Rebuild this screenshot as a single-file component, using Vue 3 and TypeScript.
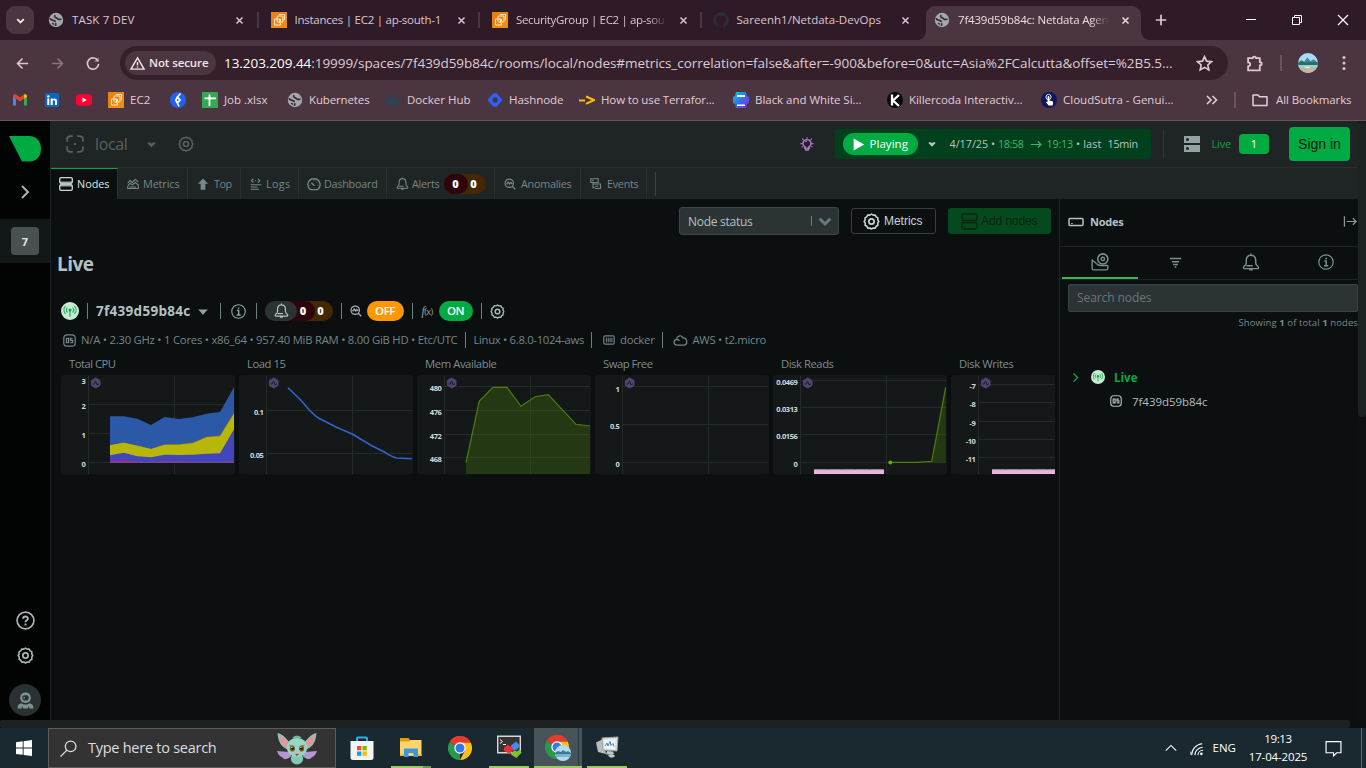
<script setup lang="ts">
import { h } from 'vue'

const icons: Record<string, string> = {
  globe: '<circle cx="8" cy="8" r="7.200" fill="#a3a8ac"/><path d="M2.200 6.200c.3 1.600 1.600 2 3 2.100 1.300.1 1.700 1 2.600 1.400M7.500 13.800c.2-1.200 0-1.700.6-2.500M7.300 3.200c-1.200 1-.6 2.200.7 2.400 1.300.2 1.200 1.400 2.300 1.700 1.300.3 2.300-.3 3.300.3M4.300 11l1.500 1.500" fill="none" stroke="#3f2b36" stroke-width="1.700"/>',
  ec2: '<rect width="16" height="16" fill="#e98213"/><path d="M0 16 16 0v16z" fill="#f49a1c" opacity=".45"/><g fill="none" stroke="#ffe9cc" stroke-width="1"><rect x="6" y="4" width="6" height="6" rx=".8"/><path d="M8 2.500h5.500V8M9.500 7v2.500M4 7h-.5v6h6v-2M4 7h4.500v4.200"/></g>',
  github: '<path fill="#2b2f36" fill-rule="evenodd" d="M8 .3a8 8 0 0 0-2.500 15.500c.4.100.5-.2.5-.4v-1.500c-2.200.5-2.700-.9-2.700-.9-.4-.9-.9-1.200-.9-1.200-.7-.5.100-.5.100-.5.800.1 1.200.8 1.200.8.700 1.200 1.900.9 2.300.7.100-.5.300-.9.500-1.100-1.800-.2-3.600-.9-3.600-4 0-.9.300-1.600.8-2.200-.1-.200-.4-1 .1-2.100 0 0 .7-.2 2.200.8a7.500 7.500 0 0 1 4 0c1.500-1 2.200-.8 2.200-.8.4 1.100.200 1.900.1 2.100.5.600.8 1.300.8 2.200 0 3.100-1.900 3.800-3.600 4 .3.200.500.7.500 1.500v2.200c0 .2.100.5.500.4A8 8 0 0 0 8 .3z"/>',
  chev: '<path d="m4.500 6.500 3.500 3.500 3.500-3.500" fill="none" stroke="currentColor" stroke-width="2"/>',
  close: '<path d="m4.300 4.300 7.400 7.400m0-7.400-7.400 7.400" stroke="currentColor" stroke-width="1.800"/>',
  plus: '<path d="M8 2.800v10.400M2.800 8h10.400" stroke="currentColor" stroke-width="1.700"/>',
  min: '<path d="M3 7.500h10" stroke="currentColor"/>',
  restore: '<path d="M3.500 5.500h7v7h-7zM5.500 5V3.500h7v7H11" fill="none" stroke="currentColor"/>',
  xwin: '<path d="m3 3 10 10m0-10L3 13" stroke="currentColor" stroke-width="1.200"/>',
  back: '<path d="M14 8H3m5-5.300L2.700 8 8 13.300" fill="none" stroke="currentColor" stroke-width="1.700"/>',
  fwd: '<path d="M2 8h11M8 2.700 13.300 8 8 13.300" fill="none" stroke="currentColor" stroke-width="1.700"/>',
  reload: '<path d="M13 6A5.600 5.600 0 1 0 13.600 9" fill="none" stroke="currentColor" stroke-width="1.700"/><path d="M13.900 2v5h-5z" fill="currentColor"/>',
  warn: '<path d="M8 2 15 14H1zM8 6.500v3.700M8 11.200v1.300" fill="none" stroke="currentColor" stroke-width="1.500"/>',
  star: '<path d="m8 1.500 1.900 4.300 4.700.5-3.500 3.100 1 4.600L8 11.600 3.900 14l1-4.600L1.400 6.300l4.700-.5z" fill="none" stroke="currentColor" stroke-width="1.500"/>',
  puzzle: '<path d="M2 3h4.300c0-2 3.200-2 3.200 0H13v3.600c2.300 0 2.300 3.200 0 3.200V14.500H2v-3.800c2.600-.2 2.600-3.600 0-3.800z" fill="none" stroke="currentColor" stroke-width="1.700"/>',
  avatar: '<clipPath id="av"><circle cx="8" cy="8" r="8"/></clipPath><g clip-path="url(#av)"><path fill="#a8dcf0" d="M0 0h16v16H0z"/><path d="M0 8 2.500 5.500 5 7l2.500-3.500L10 6.500l2.500-1.500L16 8z" fill="#3a86a6"/><path d="M0 7.500c4-1.500 6 .5 9 0s5-1 7 0V10H0z" fill="#2d6f5c"/><path d="M0 9.500h16V13H0z" fill="#8fcfe0"/><path d="M0 12.500c5-2 11-1 16-1V16H0z" fill="#c6b79b"/><path d="M5 11h5l-1 .8H6z" fill="#fff"/></g>',
  dots: '<g fill="currentColor"><circle cx="8" cy="2.500" r="1.500"/><circle cx="8" cy="8" r="1.500"/><circle cx="8" cy="13.500" r="1.500"/></g>',
  gmail: '<path d="M1 4v9.500h3V7z" fill="#4285f4"/><path d="M12 7v6.500h3V4z" fill="#34a853"/><path d="M1 4.500V4c0-1.800 2-2.300 3-1.400l4 3 4-3v4L8 9.600 1 4.500z" fill="#ea4335"/><path d="M12 2.600c1-.9 3-.4 3 1.400v.8l-3 2.300z" fill="#fbbc04"/>',
  linkedin: '<rect x="1" y="1" width="14" height="14" rx="1.500" fill="#0a66c2"/><path d="M3.300 6.500h2V13h-2zM4.300 3.200a1.200 1.200 0 1 1 0 2.400 1.200 1.200 0 0 1 0-2.400M6.700 6.500h2v1c1-1.700 4.300-1.600 4.300 1.500v4h-2V9.500c0-1.800-2.300-1.700-2.300 0V13h-2z" fill="#fff"/>',
  youtube: '<rect y="2.300" width="16" height="11.400" rx="3" fill="#ff0033"/><path d="m6.500 5.600 4.200 2.400-4.200 2.400z" fill="#fff"/>',
  blue: '<circle cx="8" cy="8" r="8" fill="#2460ee"/><path d="M10.500 1.500 7.300 5.200 10 8 7.300 10.800 9 14.500M7.300 5.200 5.800 8.200l1.500 2.600" fill="none" stroke="#fff" stroke-width="1.700"/>',
  sheet: '<rect width="16" height="16" rx="1" fill="#34a853"/><path d="M7.500 2.500v11.500M2.500 6.300h11.500" stroke="#fff" stroke-width="1.800"/>',
  docker: '<circle cx="8" cy="8" r="7.500" fill="none" stroke="#284454" stroke-width=".8"/><path d="M2.500 8h9c.2-1 .9-1.500 1-1.500l.8 1.200 1 .2c-.6 1-1.500 1.100-1.800 1.100-.8 2.300-2.500 3.500-5 3.500-3 0-5-1.500-5-4.500M4 6h4v1.500H4zM7 4h2v3.500H7z" fill="#24485c"/>',
  hash: '<rect x="2.300" y="2.300" width="11.400" height="11.400" rx="3" transform="rotate(45 8 8)" fill="#2962ff"/><circle cx="8" cy="8" r="2.700" fill="#4b3540"/>',
  terra: '<path d="M0 8.500h6M7 4.500 15 8 7 11.800" fill="none" stroke="#fbbd08" stroke-width="2"/>',
  bw: '<linearGradient id="bwg" x1="0" y1="0" x2="1" y2="1"><stop stop-color="#00d5d0"/><stop offset=".5" stop-color="#346ee8"/><stop offset="1" stop-color="#9a22e5"/></linearGradient><path d="M3 0h10l1 4 2 1v6l-2 1-1 4H3l-1-4-2-1V5l2-1z" fill="url(#bwg)"/><path d="M4 3h8v2H4zM4 12.500h8V14H4z" fill="#fff"/>',
  killer: '<circle cx="8" cy="8" r="8" fill="#080808"/><path d="M5 2.500v11M12 3 6 8.500 12 14" fill="none" stroke="#fff" stroke-width="2.300"/>',
  cloudsutra: '<circle cx="8" cy="8" r="8" fill="#10165c"/><circle cx="7.500" cy="5" r="2.600" fill="none" stroke="#dfe6ff" stroke-width="1"/><path d="M6.600 5c0-1.300 1.800-1.300 1.800 0v3.500l3 .8c1 .3.900 1.700.2 4.200h-4l-2.400-3c-.3-.9.700-1 1.400-.4z" fill="#fff"/>',
  more: '<path d="m3 4 4 4-4 4m5.500-8 4 4-4 4" fill="none" stroke="currentColor" stroke-width="1.600"/>',
  folder: '<path d="M1 3h5l1.500 1.800H15V13.500H1z" fill="none" stroke="currentColor" stroke-width="1.500" stroke-linejoin="round"/>',
  netdata: '<path d="M0 0h20.500c6.500 0 11.500 5 11.500 13 0 7.500-5 12.500-11 12.500h-8z" fill="#00ab44"/>',
  right: '<path d="m5 2 6 6-6 6" fill="none" stroke="currentColor" stroke-width="2"/>',
  help: '<circle cx="8" cy="8" r="7.100" fill="none" stroke="currentColor" stroke-width="1.400"/><path d="M6 6.600c0-2.600 4-2.500 4-.3 0 1.400-2 1.500-2 3.100M8 10.600v1.600" fill="none" stroke="currentColor" stroke-width="1.600"/>',
  gear: '<path d="M8 1.100 9.600 2l1.900-.1.900 1.700 1.600 1-.1 1.900.9 1.500-.9 1.600.1 1.900-1.600 1-.9 1.700-1.900-.1-1.600.9-1.600-.9-1.900.1-.9-1.700-1.600-1 .1-1.900L1.100 8 2 6.500l-.1-1.900 1.600-1 .9-1.700 1.900.1z" fill="none" stroke="currentColor" stroke-width="1.500" stroke-linejoin="round"/><circle cx="8" cy="8" r="2.500" fill="none" stroke="currentColor" stroke-width="1.600"/>',
  astro: '<path d="M8 .4c3.300 0 5 2.200 5 5s-1.700 4.900-5 4.900-5-2.100-5-4.900 1.700-5 5-5M5 5.300C5 7.200 6 8 8 8s3-.8 3-2.700-1-2.200-3-2.200-3 .3-3 2.200M4 10.600l2.300 1.100h3.400l2.300-1.100c2.500.6 3.500 2.300 3.500 5h-4v-2h-1v2h-5v-2h-1v2h-4c0-2.700 1-4.400 3.500-5" fill="currentColor" fill-rule="evenodd"/><circle cx="6.700" cy="5.500" r=".8" fill="currentColor"/>',
  space: '<path d="M1 6V4q0-3 3-3h2M10 1h2q3 0 3 3v2M15 10v2q0 3-3 3h-2M6 15H4q-3 0-3-3v-2" fill="none" stroke="currentColor" stroke-width="1.500"/><path d="M7.200 7.200h1.700v1.700H7.200z" fill="currentColor"/>',
  tri: '<path d="M2.500 4h11L8 10z" fill="currentColor"/>',
  heartchev: '<path d="M3.500 5.500h3L8 7l1.500-1.500h3L12.500 7 8 11.500 3.500 7z" fill="currentColor"/>',
  bulb: '<path d="M5.800 12.500v-1.300C1.500 8.500 3.500 3 8 3s6.500 5.500 2.200 8.200v1.300M5.500 12.700h5l-1.200 2.100H6.700z" fill="none" stroke="currentColor" stroke-width="1.600"/><path d="M.5 7.500h1.700M13.800 7.500h1.700M2.500 1.800l1.500 1.500M13.500 1.800 12 3.300M1.800 11.500l1.400-.7M14.200 11.500l-1.400-.7M8 .3v1.500M6 5.500l2-1" stroke="currentColor" stroke-width="1.400"/>',
  play: '<path d="M2 .5v15L15 8z" fill="#fff"/>',
  arrow: '<path d="M1 8h12.500M9.800 4.300 13.500 8l-3.700 3.700" fill="none" stroke="currentColor" stroke-width="1.400"/>',
  server: '<path d="M0 0h16v7H0zM0 9h16v7H0z" fill="#93a3a4"/><circle cx="3.500" cy="3.500" r="1.500" fill="#1f2424"/><circle cx="3.500" cy="12.500" r="1.500" fill="#1f2424"/>',
  nodes: '<rect x="1" y="1" width="14" height="6" rx="1.500" fill="none" stroke="currentColor" stroke-width="1.300"/><rect x="1" y="9" width="14" height="6" rx="1.500" fill="none" stroke="currentColor" stroke-width="1.300"/><path d="M3 5h1M3 13h1" stroke="currentColor"/>',
  nodesFill: '<path d="M1 5h14v6H1z" fill="#788180"/><rect x=".8" y=".8" width="14.400" height="6.200" rx="1.500" fill="none" stroke="#cfd6d5" stroke-width="1.500"/><rect x=".8" y="9" width="14.400" height="6.200" rx="1.500" fill="none" stroke="#cfd6d5" stroke-width="1.500"/>',
  metrics: '<path d="M1 7l3-4 3 3 4-4 4 3M1 11l3-4 3 2 4-3 4 3v5H2M1 11v3h14M3 12h9" fill="none" stroke="currentColor" stroke-width="1.500"/>',
  top: '<path d="M8 .8 14.800 7.500H11.200V15.500H4.800V7.500H1.200z" fill="currentColor"/>',
  logs: '<path d="M4.500 1 2 3.500 4.500 6M10.500 1 13 3.500 10.500 6M7 3.500h1M1 9h14M1 12h9M1 15h11" fill="none" stroke="currentColor" stroke-width="1.500"/>',
  dash: '<path d="M4 14.500C-1 11 .5 2 8 2s9 9 4 12.500zM8.500 10 5 6.500" fill="none" stroke="currentColor" stroke-width="1.500"/><path d="M3 9.500h1M12 9.500h1M8 4v1M11.500 5.500l-.7.700" stroke="currentColor"/>',
  bell: '<path d="M1.800 12c1.200-.8 1.900-1.600 2-3V6.300c.3-5.700 8.100-5.700 8.400 0V9c.1 1.400.8 2.200 2 3 .9.900.5 1.900-.6 1.900H2.400c-1.100 0-1.500-1-.6-1.900M4 11.300h5.500M6.500 15h3M8 .5v1.500" fill="none" stroke="currentColor" stroke-width="1.300"/>',
  anomaly: '<circle cx="7" cy="7" r="5.600" fill="none" stroke="currentColor" stroke-width="1.600"/><path d="M3.500 8.500l2-3 2 2.500 1.500-2 2 2M11 11l4 4" fill="none" stroke="currentColor" stroke-width="1.700"/>',
  events: '<path d="M1 1h10v5H1zM3 3.500h2M4 6v7h3M5 8h9v6H7M7 11h4" fill="none" stroke="currentColor" stroke-width="1.500"/>',
  signal: '<circle cx="9" cy="9" r="9" fill="#c5ecd0"/><circle cx="9" cy="8" r="1.500" fill="#00ab44"/><path d="M9 9v5.500M6.500 5.500c-1.300 1.400-1.300 3.600 0 5M11.500 5.500c1.300 1.400 1.300 3.600 0 5M4.500 4c-2 2.300-2 5.700 0 8M13.500 4c2 2.300 2 5.700 0 8" fill="none" stroke="#1ba552" stroke-width="1.100"/>',
  info: '<circle cx="8" cy="8" r="7.200" fill="none" stroke="currentColor" stroke-width="1.200"/><path d="M6.300 7H8.200v4.500M6 11.700h4.300M7.200 4.400h1.800" fill="none" stroke="currentColor" stroke-width="1.500"/>',
  os: '<rect x="1" y="1" width="14" height="14" rx="4" fill="none" stroke="currentColor" stroke-width="1.500"/><path d="M4.300 5.500h2.600v5H4.300zM11.800 5.500H9.300v2.400h2.500v2.600H9" fill="none" stroke="currentColor" stroke-width="1.600"/>',
  box: '<rect x="1" y="2.500" width="14" height="11" rx="2" fill="none" stroke="currentColor" stroke-width="1.500"/><path d="M4.500 5v6M7 5v6M9.500 5v6M12 5v6" stroke="currentColor" stroke-width="1.400"/>',
  cloud: '<path d="M4.500 13C0 13 .2 7 4 6.700 4.500 2 9.700 2 10.500 5.200c5.300-.5 5.500 7.300 1 7.800zM4 6.700c1.500 0 2.500.7 3 1.600" fill="none" stroke="currentColor" stroke-width="1.300"/>',
  drawer: '<rect x="1" y="4.500" width="14" height="7" rx="1" fill="none" stroke="currentColor" stroke-width="1.500"/><path d="M3.200 9.500h1.500" stroke="currentColor"/>',
  collapse: '<path d="M1.500 2.500v11M4 8h10M10.500 4.500 14 8l-3.500 3.500" fill="none" stroke="currentColor" stroke-width="1.300"/>',
  chartgear: '<path d="M1 5.500v8q0 1.500 1.500 1.500h11q1.500 0 1.500-1.500V11.200M1 6.500c2 0 2 2.500 4 2.500M5 9.500c1.500 2.500 3.500 1.500 10 1.500" fill="none" stroke="currentColor" stroke-width="1.200"/><circle cx="10.500" cy="5.300" r="4.500" fill="none" stroke="currentColor" stroke-width="1.400"/><circle cx="10.500" cy="5.300" r="1.500" fill="none" stroke="currentColor" stroke-width="1.200"/>',
  filter: '<path d="M1 3h14M3.500 7h9M5 10.500h6M7 13.500h2" stroke="currentColor" stroke-width="1.900"/>',
  win: '<path d="M0 2.200 6.700 1.300v6.300H0zM7.600 1.200 16 0v7.600H7.600zM0 8.500h6.700v6.300L0 13.900zM7.600 8.500H16V16l-8.400-1.100z" fill="#fff"/>',
  search: '<circle cx="10" cy="6" r="5" fill="none" stroke="currentColor" stroke-width="1.200"/><path d="M6.500 9.500 .5 15.500" stroke="currentColor" stroke-width="1.200"/>',
  bat: '<path d="M12 19.500 0 18.500c1 3 2 5 5 6 2 3 5 2 9-1zM27 19.500l12-1c-1 3-2 5-5 6-2 3-5 2-9-1z" fill="#b497d0"/><path d="M13 11C9 6 5 2 .5 1 1 8 3 14 10 17zM26 11c4-5 8-9 12.500-10C38 8 36 14 29 17z" fill="#8cc5b2"/><path d="M11.500 11C8 7 5 4 2 2.500 3 8 5 13 10 15zM27.500 11c3.500-4 6.500-7 9.500-8.500C36 8 34 13 29 15z" fill="#ef8fa0"/><ellipse cx="19.500" cy="26" rx="6" ry="5.500" fill="#7fcbb4"/><ellipse cx="19.500" cy="15" rx="10" ry="9.500" fill="#96d8c1"/><path d="M15 6c1-2 3-2.500 4.500-2.500S23 4 24 6z" fill="#75b8a0"/><ellipse cx="15" cy="16" rx="2.500" ry="3" fill="#8c5522"/><ellipse cx="24" cy="16" rx="2.500" ry="3" fill="#8c5522"/><circle cx="15.200" cy="16" r="1.300" fill="#23120b"/><circle cx="23.800" cy="16" r="1.300" fill="#23120b"/><circle cx="14.500" cy="15" r=".6" fill="#fff"/><circle cx="23.300" cy="15" r=".6" fill="#fff"/><path d="M17.300 21h4.400l-2.200 2.500z" fill="#d8323d"/><path d="m12 12.500 4.500 2m10.500-2-4.500 2" stroke="#4b7c6d" stroke-width=".8"/>',
  store: '<path d="M7 6V2.500q0-1 1-1h8q1 0 1 1V6" fill="none" stroke="#28b2e8" stroke-width="2"/><path d="M.5 5h23v16.500q0 2.500-2.500 2.500H3q-2.500 0-2.500-2.500z" fill="#f3f3f3"/><path d="M7 10h4.300v4.300H7z" fill="#f25022"/><path d="M12.500 10h4.300v4.300h-4.300z" fill="#7fba00"/><path d="M7 15.500h4.300v4.300H7z" fill="#00a4ef"/><path d="M12.500 15.500h4.300v4.300h-4.300z" fill="#ffb900"/>',
  explorer: '<path d="M1 3h8.500l1.500 2h11v4H1z" fill="#e59b0c"/><path d="M1 6.500h9L12 5h10.500v16H1z" fill="#fbd56b"/><path d="M5 22v-8.500h14V22h-4.500v-4h-5v4z" fill="#3b97e0"/><path d="M1 19h4v2H1zM19 19h3.500v2H19z" fill="#f0bd43"/>',
  chrome: '<path d="M12 12 1.600 6A12 12 0 0 1 22.400 6z" fill="#e33b2e"/><path d="M12 12v12A12 12 0 0 1 1.600 6z" fill="#269a4a"/><path d="M12 6.500h10.700A12 12 0 0 1 12 24l4.800-9.200z" fill="#fbc116"/><path d="M1.600 6A12 12 0 0 1 22.700 6.500H12z" fill="#e33b2e"/><circle cx="12" cy="12" r="5.700" fill="#fff"/><circle cx="12" cy="12" r="4.500" fill="#3576e8"/>',
  lake: '<clipPath id="lk"><circle cx="18" cy="18" r="8"/></clipPath><g clip-path="url(#lk)"><path d="M10 10h16v16H10z" fill="#b5dced"/><path d="m10 18 3-2 3 1 2-2 3 2 2-1 3 2v1.500H10z" fill="#3c7890"/><path d="M10 19.500h16V22H10z" fill="#79b4cf"/></g>',
  moba: '<path d="M.7.700h22.600v16.600H.7z" fill="#343434" stroke="#d8d8d8" stroke-width="1.400"/><path d="m3 4 2.500 2L3 8M6 9h3" fill="none" stroke="#fff"/><path d="m7 12 4-3 2 2 2-1 2 4-4 4-3-1-3-2z" fill="#e3313a"/><path d="m14 10 5-4 4 4-3 4-3 1-2-3z" fill="#4888ea"/><path d="m14 18 3-3 3 1 3-2 1.500 3-5 5.500-5-3z" fill="#7ac52f"/>',
  monitor: '<path d="M1 7.500 8 4l3 15-8-2z" fill="#b9bdbe"/><path d="m7 3 16-1-1 14-14-1z" fill="#dfe2e2" stroke="#9da2a3"/><path d="m9 5 11.500-.5-.7 9.500L10 13.500z" fill="#eef5f8"/><path d="m10 11 2-3 1 3 2-4.500 1 4 2-2 1 3" fill="none" stroke="#3a87ad"/><path d="m12 16 6 .5 1 2.500-8 .5zM13 20c3-1 6-1 7 1-2 2.500-6 2-7-1" fill="#c3c7c8"/>',
  up: '<path d="m2 11 6-6 6 6" fill="none" stroke="currentColor" stroke-width="1.200"/>',
  wifi: '<path d="M2 15A13 13 0 0 1 14 2M5.500 15A9.500 9.500 0 0 1 14.500 6M9 15a6 6 0 0 1 6-5.500" fill="none" stroke="currentColor" stroke-width="1.200"/><circle cx="13" cy="13.500" r="1.500" fill="currentColor"/><path d="M1 11v3.500" stroke="currentColor"/>',
  notif: '<path d="M1 1.500h14v10.500h-4L8 15v-3H1z" fill="none" stroke="currentColor" stroke-width="1.100"/>',
}

const Ico = (p: { n: string; w?: number; hh?: number; vb?: string }) =>
  h('svg', {
    width: p.w ?? 16,
    height: p.hh ?? p.w ?? 16,
    viewBox: p.vb ?? '0 0 16 16',
    style: { flex: 'none', display: 'block' },
    innerHTML: icons[p.n],
  })

// Tracks a label out (or in) so that it occupies the given width.
const vFit = {
  mounted(el: HTMLElement, b: { value: number }) {
    const len = (el.textContent ?? '').length
    if (!len || !b.value) return
    const w = el.getBoundingClientRect().width
    el.style.letterSpacing = `${(b.value + 0.5 - w) / len}px`
  },
}

const tabs = [
  { icon: 'globe', label: 'TASK 7 DEV', w: 62 },
  { icon: 'ec2', label: 'Instances | EC2 | ap-south-1', w: 146 },
  { icon: 'ec2', label: 'SecurityGroup | EC2 | ap-sou', w: 148 },
  { icon: 'github', label: 'Sareenh1/Netdata-DevOps', w: 144 },
  { icon: 'globe', label: '7f439d59b84c: Netdata Agen', w: 150 },
]

const bookmarks = [
  { icon: 'gmail', label: '', w: 0, slot: 32 },
  { icon: 'linkedin', label: '', w: 0, slot: 32 },
  { icon: 'youtube', label: '', w: 0, slot: 32 },
  { icon: 'ec2', label: 'EC2', w: 20, slot: 62 },
  { icon: 'blue', label: '', w: 0, slot: 32 },
  { icon: 'sheet', label: 'Job .xlsx', w: 43, slot: 85 },
  { icon: 'globe', label: 'Kubernetes', w: 60, slot: 98 },
  { icon: 'docker', label: 'Docker Hub', w: 63, slot: 102 },
  { icon: 'hash', label: 'Hashnode', w: 54, slot: 92 },
  { icon: 'terra', label: 'How to use Terrafor...', w: 113, slot: 154 },
  { icon: 'bw', label: 'Black and White Si...', w: 106, slot: 154 },
  { icon: 'killer', label: 'Killercoda Interactiv...', w: 113, slot: 154 },
  { icon: 'cloudsutra', label: 'CloudSutra - Genui...', w: 110, slot: 163 },
]

const navTabs = [
  { icon: 'nodesFill', label: 'Nodes', w: 32, slot: 67, pad: 8, size: 14, gap: 4 },
  { icon: 'metrics', label: 'Metrics', w: 36, slot: 70, pad: 9, size: 12, gap: 4 },
  { icon: 'top', label: 'Top', w: 17, slot: 53, pad: 9, size: 12, gap: 5 },
  { icon: 'logs', label: 'Logs', w: 24, slot: 58, pad: 9, size: 12, gap: 4 },
  { icon: 'dash', label: 'Dashboard', w: 53, slot: 88, pad: 8, size: 14, gap: 3 },
  { icon: 'bell', label: 'Alerts', w: 27, slot: 108, pad: 9, size: 13, gap: 3, badge: true },
  { icon: 'anomaly', label: 'Anomalies', w: 50, slot: 86, pad: 9, size: 12, gap: 5 },
  { icon: 'events', label: 'Events', w: 31, slot: 66, pad: 9, size: 12, gap: 5 },
]

const xs = [49, 62.7, 76.3, 90, 103.7, 117.7, 131.7, 145.7, 159, 173]
const area = (ys: number[]) => 'M49 87.500' + xs.map((x, i) => `L${x} ${ys[i]}`).join('') + 'V87.500z'

interface Chart {
  title: string
  w: number
  labels: [string, number][]
  lines: number[]
  paths: { d: string; fill?: string; stroke?: string; sw?: number }[]
  bar?: number
}

const charts: Chart[] = [
  {
    title: 'Total CPU', w: 46,
    labels: [['3', 6], ['2', 31], ['1', 60], ['0', 89]],
    lines: [29.5, 58.5, 87.5],
    paths: [
      { d: area([41.3, 41.3, 43.7, 50, 42, 44, 42.3, 38.7, 37, 12.3]), fill: '#2c58a8' },
      { d: area([70.1, 67.5, 70.4, 73.7, 69.4, 69.2, 67.5, 61.6, 60.5, 37.6]), fill: '#a8680c' },
      { d: area([70.3, 67.7, 70.7, 74, 69.7, 69.7, 68.3, 62.3, 61.3, 38.7]), fill: '#b7b70b' },
      { d: area([80.3, 77.7, 81.3, 82.3, 79.7, 80, 79.7, 78.7, 78.3, 54.3]), fill: '#4146bd' },
      { d: area([86.3, 84, 86.7, 87, 86, 86.3, 87, 87, 86.7, 86.3]), fill: '#8b2f9c' },
    ],
  },
  {
    title: 'Load 15', w: 38,
    labels: [['0.1', 37], ['0.05', 80]],
    lines: [35.5, 78.5],
    paths: [{ d: 'M49 12.700 61.700 25 71 35.700Q76 41 80.300 43.500L97 52 113.700 59.300Q123 65 132.700 70.700L146 77.300Q153 82 157.700 83L173 83.700', stroke: '#3463c9', sw: 1.6 }],
  },
  {
    title: 'Mem Available', w: 71,
    labels: [['480', 13.5], ['476', 37.5], ['472', 61.5], ['468', 84.5]],
    lines: [11.5, 35.5, 59.5, 82.5],
    paths: [
      { d: 'M49 99V87.700L62.300 26 76 12.300H90L104 31.300 118 21.700 131.300 19.700 145 34.300 159 49.300 173 51V99z', fill: 'rgba(78,132,10,.3)' },
      { d: 'M49 87.700 62.300 26 76 12.300H90L104 31.300 118 21.700 131.300 19.700 145 34.300 159 49.300 173 51', stroke: '#4d7f0c', sw: 1.2 },
    ],
  },
  {
    title: 'Swap Free', w: 49,
    labels: [['1', 14.5], ['0.5', 51.5], ['0', 89]],
    lines: [11.5, 49.5, 87.5],
    paths: [],
  },
  {
    title: 'Disk Reads', w: 52,
    labels: [['0.0469', 7.5], ['0.0313', 34.5], ['0.0156', 61.5], ['0', 89]],
    lines: [5.5, 32.5, 59.5, 87.5],
    paths: [
      { d: 'M117.300 87.500 158.700 86.300 172.700 12.300V87.500z', fill: 'rgba(78,132,10,.3)' },
      { d: 'M117.300 87.300H145L158.700 86.300 172.700 12.300', stroke: '#4d7f0c', sw: 1.2 },
      { d: 'M115.300 87.500a2 2 0 1 1 4 0a2 2 0 1 1-4 0', fill: '#66a80f' },
    ],
    bar: 70,
  },
  {
    title: 'Disk Writes', w: 54,
    labels: [['-7', 11.5], ['-8', 29.5], ['-9', 48.5], ['-10', 66.5], ['-11', 84.5]],
    lines: [9.5, 27.5, 46.5, 64.5, 82.5],
    paths: [],
    bar: 130,
  },
]
</script>

<template>
  <div class="screen">
    <div class="tabstrip">
      <div class="tabmenu"><Ico n="chev" :w="15" /></div>
      <div v-for="(t, i) in tabs" :key="i" class="tab" :class="{ active: i === 4, sep: i < 3 }">
        <Ico :n="t.icon" />
        <div class="tabtext" :class="{ faded: i === 2 || i === 4 }"><span v-fit="t.w">{{ t.label }}</span></div>
        <Ico n="close" :w="13" />
      </div>
      <Ico n="plus" :w="16" class="newtab" />
      <div class="wincontrols"><Ico n="min" /><Ico n="restore" /><Ico n="xwin" /></div>
    </div>

    <div class="toolbar">
      <div class="navbtns"><Ico n="back" :w="15" /><Ico n="fwd" :w="15" /><Ico n="reload" /></div>
      <div class="omnibox">
        <div class="chip"><Ico n="warn" :w="15" /><span v-fit="59">Not secure</span></div>
        <div class="url"><span v-fit="948"><b>13.203.209.44</b>:19999/spaces/7f439d59b84c/rooms/local/nodes#metrics_correlation=false&amp;after=-900&amp;before=0&amp;utc=Asia%2FCalcutta&amp;offset=%2B5.5...</span></div>
        <Ico n="star" :w="17" />
      </div>
      <div class="tools"><Ico n="puzzle" :w="17" /><i></i><Ico n="avatar" :w="20" /><Ico n="dots" /></div>
    </div>

    <div class="bookmarks">
      <div v-for="(b, i) in bookmarks" :key="i" class="bm" :style="{ width: b.slot + 'px' }">
        <Ico :n="b.icon" /><span v-if="b.label" v-fit="b.w">{{ b.label }}</span>
      </div>
      <Ico n="more" /><i class="bmsep"></i><Ico n="folder" /><span v-fit="75" class="all">All Bookmarks</span>
    </div>

    <div class="page">
      <aside class="rail">
        <Ico class="logo" n="netdata" :w="32" :hh="26" vb="0 0 32 26" />
        <Ico class="expand" n="right" :w="16" />
        <div class="spaceslot"><div class="space">7</div></div>
        <div class="railfoot">
          <Ico n="help" :w="19" /><Ico n="gear" :w="17" />
          <div class="user"><Ico n="astro" :w="17" :hh="19" /></div>
        </div>
      </aside>

      <div class="body">
        <header class="head">
          <Ico n="space" :w="18" /><span v-fit="32" class="room">local</span><Ico class="hc" n="heartchev" :w="13" /><Ico class="hg" n="gear" />
          <div class="headright">
            <Ico class="bulb" n="bulb" :w="14" />
            <div class="timebar">
              <div class="playing"><Ico n="play" :w="13" /><span v-fit="38">Playing</span></div>
              <Ico class="tc" n="heartchev" :w="12" />
              <span v-fit="45" class="date">4/17/25 •</span><span v-fit="25" class="grn t1">18:58</span><Ico class="grn ar" n="arrow" :w="13" /><span v-fit="26" class="grn">19:13</span><span v-fit="25" class="last">• last</span><span v-fit="30" class="dur">15min</span>
            </div>
            <i class="hsep"></i>
            <Ico n="server" /><span v-fit="19" class="livelbl">Live</span><span class="count">1</span>
            <button class="signin">Sign in</button>
          </div>
        </header>

        <nav class="nav">
          <div v-for="(n, i) in navTabs" :key="i" class="navtab" :class="{ on: i === 0 }" :style="{ width: n.slot + 'px', paddingLeft: n.pad + 'px', gap: n.gap + 'px' }">
            <Ico :n="n.icon" :w="n.size" /><span v-fit="n.w">{{ n.label }}</span>
            <div v-if="n.badge" class="badges"><b class="crit">0</b><b class="wrn">0</b></div>
          </div>
          <i class="navsep"></i>
        </nav>

        <div class="cols">
          <main class="content">
            <div class="actions">
              <div class="select"><span v-fit="64">Node status</span><i></i><Ico n="chev" :w="24" /></div>
              <button class="btn"><Ico n="gear" :w="17" /><span v-fit="38">Metrics</span></button>
              <button class="btn add"><Ico n="nodes" :w="17" /><span v-fit="56">Add nodes</span></button>
            </div>
            <h1><span v-fit="36">Live</span></h1>

            <div class="noderow">
              <Ico n="signal" :w="18" vb="0 0 18 18" /><i></i>
              <span v-fit="94" class="name">7f439d59b84c</span><Ico class="caret" n="tri" :w="14" /><i></i>
              <Ico class="inf" n="info" :w="15" /><i></i>
              <div class="alerts"><span class="bellwrap"><Ico n="bell" :w="15" /></span><b class="crit">0</b><b class="wrn">0</b></div><i></i>
              <Ico class="mag" n="anomaly" :w="12" /><span class="pill off">OFF</span><i></i>
              <span class="fx"><em>f</em>(x)</span><span class="pill onn">ON</span><i></i>
              <Ico class="ng" n="gear" :w="15" />
            </div>

            <div class="specs">
              <Ico n="os" :w="13" /><span v-fit="376" class="s1">N/A • 2.30 GHz • 1 Cores • x86_64 • 957.40 MiB RAM • 8.00 GiB HD • Etc/UTC</span><i></i>
              <span v-fit="110">Linux • 6.8.0-1024-aws</span><i></i>
              <Ico class="dk" n="box" :w="12" /><span v-fit="34">docker</span><i></i>
              <Ico class="cl" n="cloud" :w="15" /><span v-fit="73">AWS • t2.micro</span>
            </div>

            <div class="charts">
              <div v-for="(c, ci) in charts" :key="ci" class="chart">
                <div class="ctitle"><span v-fit="c.w">{{ c.title }}</span></div>
                <svg class="plot" width="174" height="100" viewBox="0 0 174 100">
                  <rect width="174" height="99.500" rx="3" fill="#141819" />
                  <path d="M27.500 1V99M113.500 1V99" stroke="#24292a" />
                  <path v-for="y in c.lines" :key="y" :d="`M28 ${y}H173`" stroke="#24292a" />
                  <path v-for="(p, pi) in c.paths" :key="pi" :d="p.d" :fill="p.fill ?? 'none'" :stroke="p.stroke ?? 'none'" :stroke-width="p.sw ?? 0" />
                  <g v-if="c.bar"><rect x="41" y="94.500" :width="c.bar" height="4.500" fill="#e9b5da" /><path :d="`M41 94.700h${c.bar}`" stroke="#a98aa2" stroke-dasharray="13 1" /></g>
                  <path d="M34.700 3 39 5.500v5L34.700 13l-4.300-2.500v-5z" fill="#504570" stroke="#504570" stroke-linejoin="round" />
                  <path d="M31.500 9h1.500l1.500-3 1.500 4 1-1h1" fill="none" stroke="#191c24" />
                  <text v-for="l in c.labels" :key="l[0]" x="24.500" :y="l[1] + 2.700" text-anchor="end" class="tick">{{ l[0] }}</text>
                </svg>
              </div>
            </div>
          </main>

          <aside class="side">
            <div class="sidehead"><Ico n="drawer" /><span v-fit="33">Nodes</span><Ico n="collapse" :w="15" /></div>
            <div class="sidetabs">
              <div class="st on"><Ico n="chartgear" :w="18" /></div>
              <div class="st"><Ico n="filter" :w="13" /></div>
              <div class="st"><Ico n="bell" :w="18" /></div>
              <div class="st"><Ico n="info" :w="16" /></div>
            </div>
            <div class="searchbox"><span v-fit="74">Search nodes</span></div>
            <div class="showing"><span v-fit="119">Showing <b>1</b> of total <b>1</b> nodes</span></div>
            <div class="tree"><Ico n="right" :w="11" /><Ico n="signal" :w="14" vb="0 0 18 18" /><b v-fit="23">Live</b></div>
            <div class="leaf"><Ico n="os" :w="12" /><span v-fit="75">7f439d59b84c</span></div>
          </aside>
        </div>
      </div>
      <div class="vscroll"><div></div></div>
      <div class="hscroll"></div>
    </div>

    <div class="taskbar">
      <div class="start"><Ico n="win" /></div>
      <div class="tsearch"><Ico n="search" :w="17" /><span v-fit="128">Type here to search</span><Ico n="bat" :w="40" :hh="33" vb="0 0 39 32" /></div>
      <div class="apps">
        <div class="app"><Ico n="store" :w="24" vb="0 0 24 24" /></div>
        <div class="app run part"><Ico n="explorer" :w="24" vb="0 0 24 24" /></div>
        <div class="app"><Ico n="chrome" :w="24" vb="0 0 24 24" /></div>
        <div class="app run"><Ico n="moba" :w="25" vb="0 0 25 24" /></div>
        <div class="app run cur"><svg width="26" height="26" viewBox="0 0 26 26"><g v-html="icons.chrome"></g><g v-html="icons.lake"></g></svg></div>
        <div class="app run"><Ico n="monitor" :w="24" vb="0 0 24 24" /></div>
      </div>
      <div class="tray">
        <Ico n="up" :w="14" /><Ico n="wifi" :w="14" /><span v-fit="23" class="eng">ENG</span>
        <div class="clock"><span v-fit="27">19:13</span><span v-fit="58">17-04-2025</span></div>
        <Ico n="notif" :w="17" />
        <i class="peek"></i>
      </div>
    </div>
  </div>
</template>

<style>
body { margin: 0; background: #0b0f10; overflow: hidden; }
</style>

<style scoped>
.screen { width: 1366px; height: 768px; overflow: hidden; display: flex; flex-direction: column; font: 11.5px/1 "Segoe UI", "Open Sans", "Noto Sans", sans-serif; color: #e0cdd6; }
.screen span, .screen b { white-space: nowrap; display: inline-block; flex: none; }
.screen i { flex: none; }
.screen * { box-sizing: border-box; }

.tabstrip { height: 40px; flex: none; background: #2f1b27; display: flex; align-items: center; color: #dcc6d0; }
.tabmenu { width: 28px; height: 28px; margin: 0 3px 0 6px; border-radius: 9px; background: #4b3540; display: grid; place-items: center; color: #f3e6ec; }
.tab { width: 221.5px; height: 28px; padding: 0 11px 0 11px; display: flex; align-items: center; position: relative; flex: none; }
.tab:nth-child(3), .tab:nth-child(4) { padding: 0 10px 0 12px; }
.tab.sep { border-right: 2px solid #49343f; height: 16px; }
.tab.active { height: 34px; align-self: flex-end; margin-left: 3px; width: 215px; padding: 0 9px 6px 8px; background: #4b3540; border-radius: 9px 9px 0 0; color: #eadce3; }
.tab.active::before, .tab.active::after { content: ""; position: absolute; bottom: 0; width: 8px; height: 8px; }
.tab.active::before { left: -8px; background: radial-gradient(circle at 0 0, transparent 7.500px, #4b3540 8px); }
.tab.active::after { right: -8px; background: radial-gradient(circle at 100% 0, transparent 7.500px, #4b3540 8px); }
.tabtext { flex: 1; margin: 0 10px 0 8px; padding: 3px 0; line-height: 16px; display: flex; min-width: 0; }
.tabtext.faded { mask-image: linear-gradient(90deg, #000 88%, transparent); }
.newtab { margin-left: 12px; }
.wincontrols { margin-left: auto; margin-right: 15px; display: flex; gap: 30px; color: #fff; }

.toolbar { height: 46px; flex: none; background: #4b3540; display: flex; align-items: center; }
.navbtns { width: 120px; padding-left: 15px; display: flex; align-items: center; gap: 20px; color: #dcc3cf; }
.navbtns :nth-child(2) { opacity: .45; }
.omnibox { width: 1108px; height: 34px; background: #341f2b; border-radius: 17px; padding: 0 15px 0 5px; display: flex; align-items: center; }
.chip { width: 91px; height: 24px; border-radius: 12px; background: #4b3540; display: flex; align-items: center; padding-left: 5px; gap: 4px; font-weight: 600; color: #f1e5ea; }
.url { flex: 1; margin-left: 8px; font-size: 13.5px; line-height: 20px; color: #dccdd4; }
.url b { font-weight: 400; color: #fff; display: inline; }
.tools { display: flex; align-items: center; margin-left: 18px; color: #dfc6d2; }
.tools i { width: 2px; height: 16px; background: #6a525e; margin: 0 16px 0 17px; }
.tools :nth-child(4) { margin-left: 18px; }

.bookmarks { height: 35px; flex: none; background: #4b3540; border-bottom: 1px solid #68565f; display: flex; align-items: center; padding: 0 0 6px 12px; color: #e0ced7; }
.bm { display: flex; align-items: center; gap: 6px; flex: none; line-height: 16px; }
.bmsep { width: 2px; height: 16px; background: #6a525e; margin: 0 16px 0 14px; }
.all { margin-left: 8px; line-height: 16px; }

.page { height: 607px; flex: none; background: #0b0f10; display: grid; grid-template: 599px 8px / 51px 1307px 8px; color: #6f8184; }
.rail { background: #020404; border-right: 1px solid #1e2424; display: flex; flex-direction: column; align-items: center; color: #a9b5b5; }
.logo { margin-top: 15px; }
.expand { margin-top: 22px; }
.spaceslot { margin-top: 19px; width: 50px; height: 44px; background: #121717; display: grid; place-items: center; }
.space { width: 28px; height: 28px; border-radius: 4px; background: #48514f; color: #e0e6e6; font-weight: 700; display: grid; place-items: center; font-size: 11px; }
.railfoot { margin-top: auto; display: flex; flex-direction: column; align-items: center; gap: 17px; padding-bottom: 4px; }
.user { width: 32px; height: 32px; border-radius: 50%; background: #293132; color: #7f9292; display: grid; place-items: center; margin-top: 3px; }

.body { display: flex; flex-direction: column; min-width: 0; }
.head { height: 47px; flex: none; background: #1f2424; border-bottom: 1px solid #293030; display: flex; align-items: center; padding-left: 15px; color: #586161; }
.room { font-size: 16px; margin-left: 11px; line-height: 22px; }
.hc { margin-left: 17px; }
.hg { margin-left: 20px; }
.headright { margin-left: auto; display: flex; align-items: center; margin-right: 8px; }
.bulb { color: #b57bd0; }
.timebar { width: 316px; height: 30px; margin-left: 21px; border-radius: 3px; background: #00401c; display: flex; align-items: center; padding-left: 8px; font-size: 10.8px; color: #b9c6bf; }
.playing { width: 75px; height: 22px; border-radius: 11px; background: #00ab44; color: #fff; display: flex; align-items: center; padding-left: 9px; gap: 5px; font-size: 11.5px; line-height: 16px; }
.tc { margin: 0 11px 0 8px; }
.date { margin-left: 1px; }
.grn { color: #3fb764; }
.t1 { margin: 0 6px 0 3px; }
.ar { margin-right: 4px; }
.last { margin-left: 3px; }
.dur { margin-left: 6px; }
.hsep { width: 1px; height: 30px; background: #2f3737; margin: 0 20px 0 12px; }
.livelbl { color: #0ba246; font-size: 11px; margin: -1px 0 0 12px; }
.count { width: 30px; height: 20px; margin-left: 8px; border-radius: 4px; background: #00ab44; color: #fff; text-align: center; line-height: 20px; font-size: 11px; }
.signin { width: 61px; height: 34px; margin-left: 20px; border: 0; border-radius: 4px; background: #00ab44; color: #07200f; font: 14px "Liberation Sans", Arial, sans-serif; padding: 0; }

.nav { height: 31px; flex: none; background: #1f2424; display: flex; align-items: center; font-size: 10.8px; color: #758789; line-height: 16px; }
.navtab { height: 31px; border-right: 1px solid #293030; display: flex; align-items: center; flex: none; }
.navtab.on { background: #0b0f10; border-top: 1px solid #00ab44; color: #dfe5e5; }
.navsep { width: 1px; height: 24px; background: #3a4343; margin-left: 8px; }
.badges, .alerts { display: flex; height: 20px; border-radius: 10px; background: #432802; align-items: center; color: #fff; font-weight: 600; font-size: 11px; }
.badges { width: 42px; margin-left: 1px; }
.crit { width: 24px; height: 20px; border-radius: 10px; background: #2e040b; text-align: center; line-height: 20px; }
.wrn { width: 12px; text-align: center; line-height: 20px; }

.cols { flex: 1; display: flex; min-height: 0; }
.content { width: 1008px; height: 521px; flex: none; }
.actions { margin: 8px 8px 0 0; height: 28px; display: flex; justify-content: flex-end; align-items: center; gap: 12px; }
.select { width: 160px; height: 28px; border: 1px solid #3b4646; border-radius: 3px; background: #2b3334; display: flex; align-items: center; padding: 2px 1px 0 8px; color: #b5c1c2; line-height: 16px; font-size: 12px; }
.select i { width: 1px; height: 10px; background: #6d7a7a; margin: -2px 1px 0 auto; }
.select svg { color: #69797a; margin-top: -2px; }
.btn { width: 85px; height: 26px; border: 1px solid #393e41; border-radius: 3px; background: transparent; color: #c9d3d3; font: 12px "Liberation Sans", Arial, sans-serif; display: flex; align-items: center; padding: 0 0 0 11px; gap: 4px; }
.add { width: 103px; background: #05491f; border-color: #05491f; color: #03260f; padding-left: 12px; gap: 3px; }
h1 { margin: 15px 0 0 6px; font-size: 19px; line-height: 28px; height: 28px; color: #b4c1c3; font-weight: 700; }
.noderow { margin: 22px 0 0 10px; height: 22px; display: flex; align-items: center; line-height: 18px; color: #90a0a1; }
.noderow i { width: 1px; height: 16px; background: #6f7f7f; margin: 0 8px; }
.name { font-size: 13.5px; font-weight: 700; color: #b4c1c3; }
.caret { margin: 3px 2px 0 5px; }
.inf { margin: 0 2px; }
.alerts { width: 68px; position: relative; }
.bellwrap { width: 32px; height: 20px; border-radius: 10px; background: #2b3334; padding: 2px 0 0 9px; color: #b7c2c2; position: relative; z-index: 1; }
.alerts .crit { margin-left: -8px; padding-left: 3px; width: 26px; border-radius: 0 10px 10px 0; }
.mag { margin-right: 5px; color: #a9b6b6; }
.pill { height: 20px; border-radius: 10px; text-align: center; line-height: 20px; color: #fff; font-size: 11.5px; font-weight: 600; letter-spacing: -.5px; }
.off { width: 37px; background: #ff9700; }
.onn { width: 34px; background: #00ab44; margin-left: 4px; }
.fx { width: 13px; font-size: 9px; letter-spacing: -.6px; margin-left: 1px; }
.fx em { font-family: "Liberation Serif", serif; font-size: 12px; }
.ng { color: #a9b6b6; }
.specs { margin: 8px 0 0 12px; height: 20px; display: flex; align-items: center; line-height: 16px; font-size: 11.3px; color: #738588; }
.specs i { width: 1px; height: 16px; background: #6f7f7f; margin: 0 8px 0 7px; }
.s1 { margin-left: 5px; }
.specs .dk { margin: 0 5px 0 3px; }
.specs .cl { margin: 0 5px 0 2px; }
.charts { margin: 5px 4px 0 10px; display: flex; gap: 4px; overflow: hidden; }
.chart { width: 174px; flex: none; }
.ctitle { height: 20px; padding-left: 8px; line-height: 18px; font-size: 11.3px; color: #7b8d8f; }
.plot { display: block; }
.tick { font: 700 7.500px "Open Sans", "Noto Sans", sans-serif; fill: #d6dada; letter-spacing: -.4px; }

.side { width: 299px; min-width: 0; flex: none; border-left: 1px solid #1e2424; font-size: 11.5px; line-height: 16px; }
.sidehead { height: 48px; border-bottom: 1px solid #1e2424; display: flex; align-items: center; padding: 0 0 2px 8px; color: #b4c1c3; font-weight: 700; gap: 6px; font-size: 11px; }
.sidehead svg:last-child { margin-left: auto; color: #8b9999; }
.sidetabs { height: 33px; display: flex; padding-left: 2px; border-bottom: 1px solid #1e2424; color: #7d8e8f; }
.st { width: 75.500px; height: 32px; display: grid; place-items: center; padding-bottom: 2px; flex: none; }
.st.on { border-bottom: 2px solid #2fb957; padding: 0; }
.searchbox { margin: 4px 0 0 8px; height: 28px; border: 1px solid #3a4444; background: #2b3334; padding: 5px 0 0 8px; border-radius: 2px; color: #687779; font-size: 12px; }
.showing { text-align: right; font-size: 9.500px; height: 20px; line-height: 22px; color: #7a898a; }
.tree { margin-top: 33px; height: 24px; display: flex; align-items: center; padding: 0 0 0 10px; color: #00ab44; }
.tree svg:nth-child(2) { margin: 0 9px 0 10px; }
.tree b { padding-top: 2px; }
.leaf { height: 24px; display: flex; align-items: center; padding-left: 50px; gap: 10px; color: #b0bdbe; }
.leaf svg { margin-top: -1px; }
.leaf span { padding-top: 2px; }
.vscroll { background: #0c1011; }
.vscroll div { width: 8px; height: 296px; background: #1d2222; border-radius: 4px; }
.hscroll { grid-column: 1 / 3; width: 1350px; background: #1d2121; border-radius: 3px; }

.taskbar { height: 40px; flex: none; background: #1a292f; display: flex; color: #fff; }
.start { width: 48px; display: grid; place-items: center; }
.tsearch { width: 288px; height: 40px; border: 1px solid #5c5c5c; background: #333; display: flex; align-items: center; padding-left: 11px; gap: 11px; font-size: 14.500px; line-height: 20px; color: #dedede; }
.tsearch svg:last-child { margin: 1px 18px 0 auto; }
.apps { display: flex; padding-left: 6px; gap: 9px; }
.app { width: 40px; height: 40px; display: grid; place-items: center; flex: none; }
.run { border-bottom: 2px solid #9bcc5b; }
.part { border-image: linear-gradient(90deg, #9bcc5b 78%, #6e9650 78%) 1; border-width: 0 0 2px; border-style: solid; }
.cur { width: 48px; background: linear-gradient(90deg, #46545a 44px, #26353b 44px, #26353b 45px, #46545a 45px); margin: 0 -4px 0 -4px; padding-top: 2px; }
.tray { margin-left: auto; display: flex; align-items: center; font-size: 11.500px; line-height: 16px; }
.tray svg:nth-of-type(2) { margin: 2px 9px 0 12px; }
.clock { width: 60px; margin: 0 17px 0 12px; display: flex; flex-direction: column; align-items: center; gap: 2px; }
.peek { width: 1px; height: 40px; background: #59666b; margin: 0 4px 0 19px; }
</style>
